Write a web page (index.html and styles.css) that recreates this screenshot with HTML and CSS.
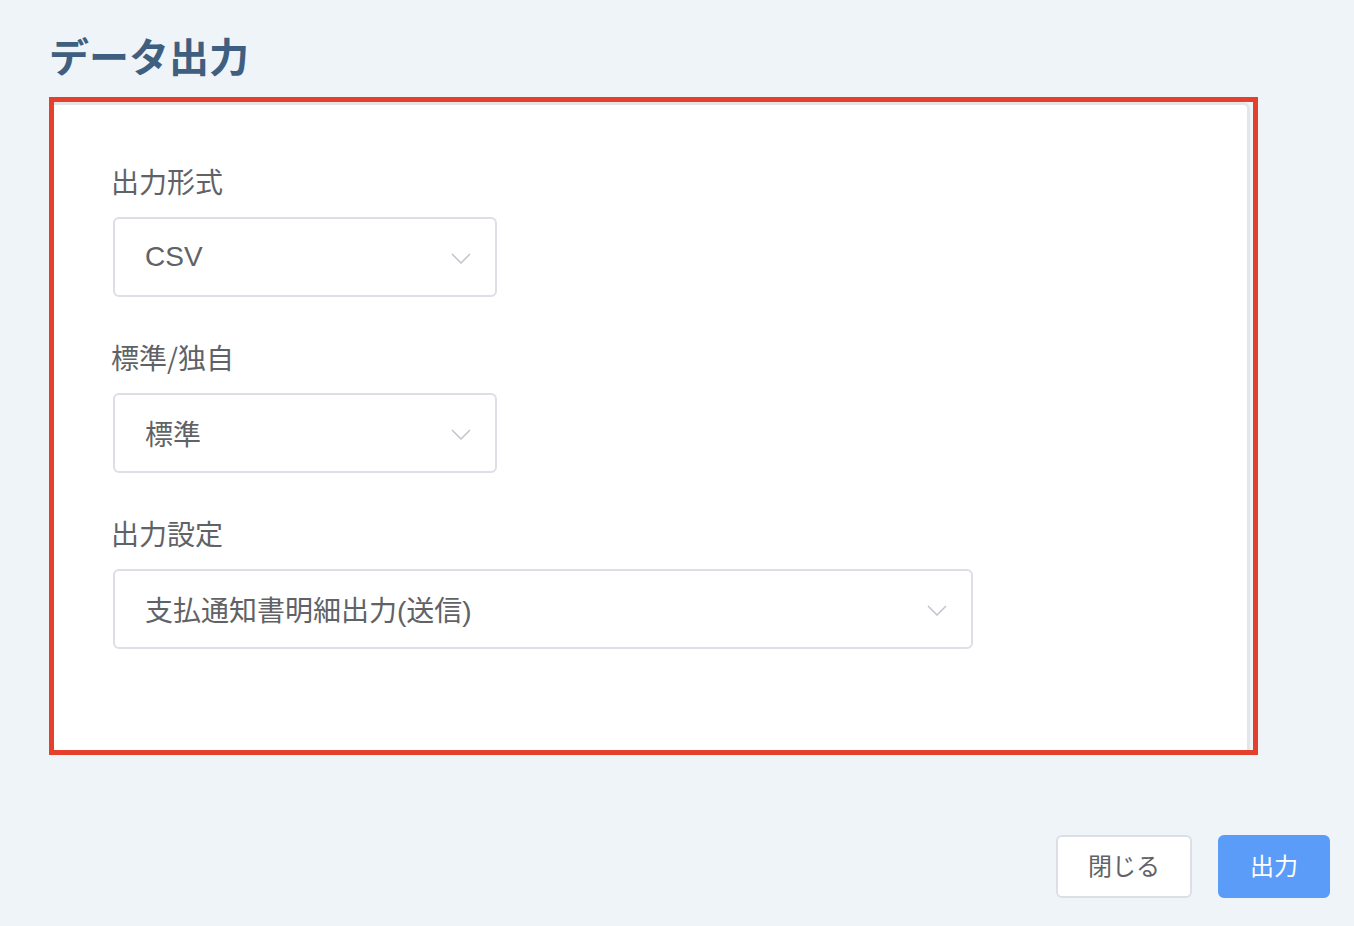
FILE: index.html
```html
<!DOCTYPE html>
<html lang="ja">
<head>
<meta charset="utf-8">
<title>データ出力</title>
<link rel="stylesheet" href="styles.css">
</head>
<body>
<div class="page">
  <h1 class="title">データ出力</h1>
  <div class="highlight">
    <div class="card">
      <div class="field">
        <div class="label">出力形式</div>
        <div class="select select-short">
          <span class="value">CSV</span>
          <svg class="chev" width="20" height="11" viewBox="0 0 20 11"><path d="M1 1 L10 10 L19 1" fill="none" stroke="#c0c4cc" stroke-width="1.5"/></svg>
        </div>
      </div>
      <div class="field">
        <div class="label">標準/独自</div>
        <div class="select select-short">
          <span class="value">標準</span>
          <svg class="chev" width="20" height="11" viewBox="0 0 20 11"><path d="M1 1 L10 10 L19 1" fill="none" stroke="#c0c4cc" stroke-width="1.5"/></svg>
        </div>
      </div>
      <div class="field">
        <div class="label">出力設定</div>
        <div class="select select-long">
          <span class="value">支払通知書明細出力(送信)</span>
          <svg class="chev" width="20" height="11" viewBox="0 0 20 11"><path d="M1 1 L10 10 L19 1" fill="none" stroke="#c0c4cc" stroke-width="1.5"/></svg>
        </div>
      </div>
    </div>
  </div>
  <div class="footer">
    <button class="btn btn-default">閉じる</button>
    <button class="btn btn-primary">出力</button>
  </div>
</div>
</body>
</html>
```

FILE: styles.css
```css
html, body {
  margin: 0;
  padding: 0;
  background: #eff4f9;
  font-family: "Liberation Sans", "Noto Sans CJK JP", sans-serif;
}
.page {
  padding-top: 35px;
  padding-left: 49px;
  width: 1354px;
  height: 926px;
  box-sizing: border-box;
  display: flex;
  flex-direction: column;
}
.title {
  margin: 0 0 22px 0;
  font-size: 40px;
  line-height: 40px;
  font-weight: 700;
  color: #3f5f80;
  font-family: "Noto Sans CJK JP", sans-serif;
}
.highlight {
  width: 1199px;
  height: 648px;
  border: 5px solid #e5402b;
  display: flex;
}
.card {
  width: 1196px;
  background: #fff;
  border-top: 3px solid #e3e5e9;
  border-right: 3px solid #e3e5e9;
  border-top-right-radius: 7px;
  box-sizing: border-box;
  padding: 62px 0 0 59px;
  display: flex;
  flex-direction: column;
  gap: 46px;
}
.field {
  display: flex;
  flex-direction: column;
  gap: 22px;
}
.label {
  font-size: 28px;
  line-height: 28px;
  color: #606266;
  font-family: "Noto Sans CJK JP", sans-serif;
  text-indent: -2px;
}
.select {
  height: 80px;
  box-sizing: border-box;
  border: 2px solid #dcdfe6;
  border-radius: 6px;
  display: flex;
  align-items: center;
  justify-content: space-between;
  padding: 0 24px 0 30px;
}
.select-short { width: 384px; }
.select-long { width: 860px; }
.value {
  font-size: 28px;
  color: #606266;
}
.chev { display: block; margin-top: 2px; }
.footer {
  display: flex;
  justify-content: flex-end;
  gap: 26px;
  margin-top: 80px;
  padding-right: 24px;
}
.btn {
  height: 63px;
  box-sizing: border-box;
  border-radius: 6px;
  font-size: 24px;
  line-height: 24px;
  font-family: "Noto Sans CJK JP", sans-serif;
  padding: 0 0 4px 0;
  cursor: pointer;
}
.btn-default {
  width: 136px;
  background: #fff;
  border: 2px solid #dcdfe6;
  color: #606266;
}
.btn-primary {
  width: 112px;
  background: #5b9cf8;
  border: 2px solid #5b9cf8;
  color: #fff;
}
```
